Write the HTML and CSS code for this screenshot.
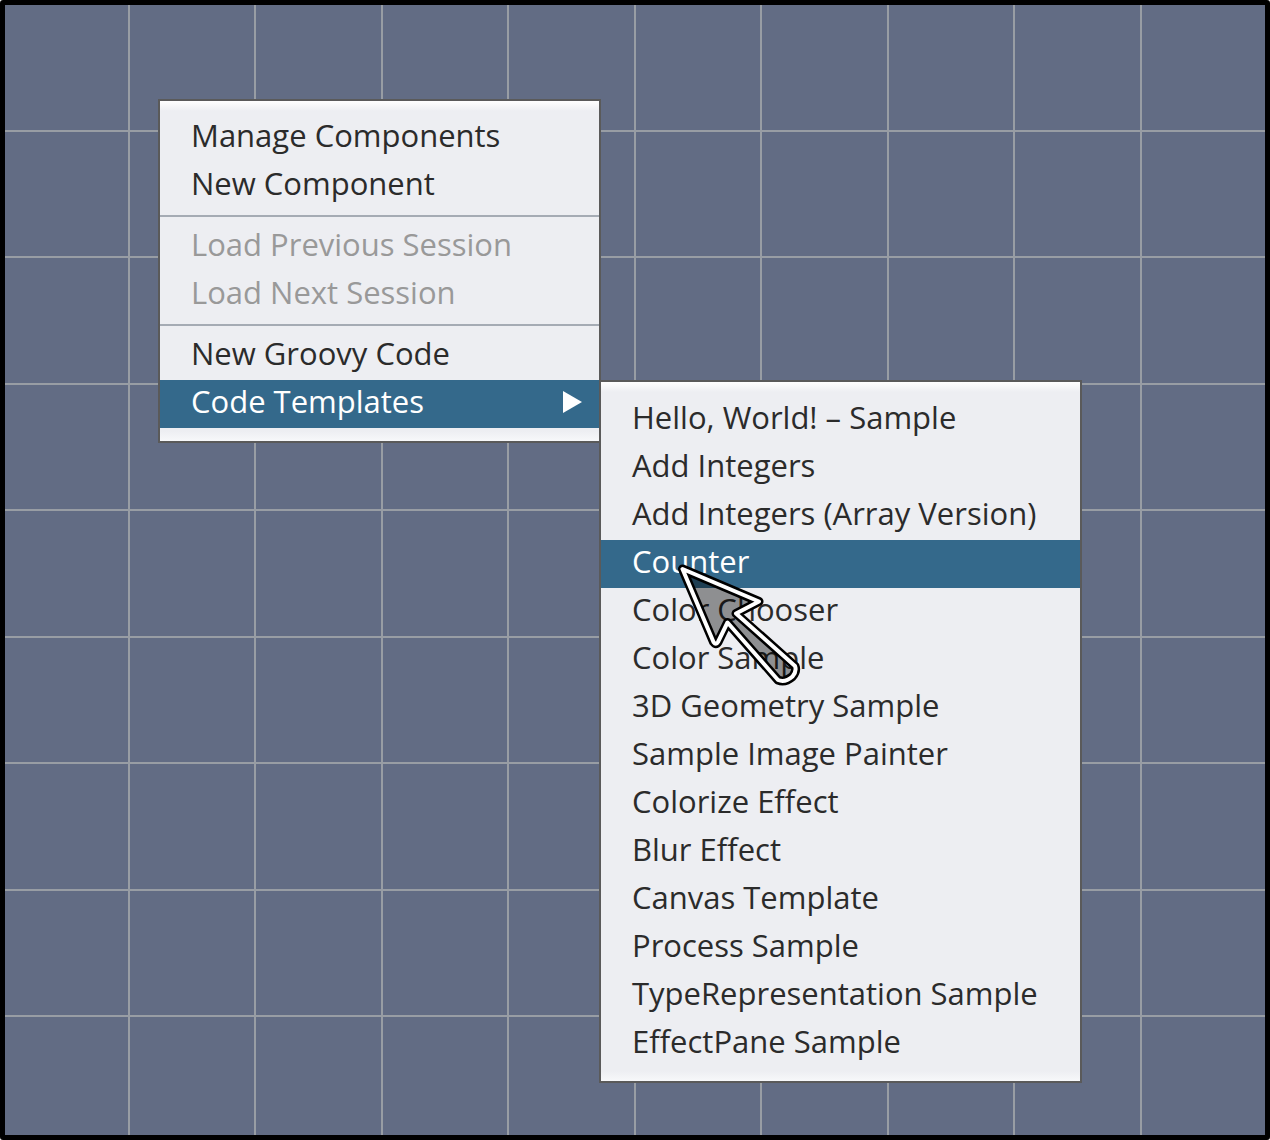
FILE: index.html
```html
<!DOCTYPE html>
<html lang="en">
<head>
<meta charset="utf-8">
<title>Code Templates</title>
<link rel="stylesheet" href="styles.css">
</head>
<body>
<main class="desktop">
  <ul class="menu menu-main">
    <li><button class="item">Manage Components</button></li>
    <li><button class="item">New Component</button></li>
    <li class="separator"></li>
    <li><button class="item" disabled>Load Previous Session</button></li>
    <li><button class="item" disabled>Load Next Session</button></li>
    <li class="separator"></li>
    <li><button class="item">New Groovy Code</button></li>
    <li>
      <button class="item selected" aria-haspopup="true" aria-expanded="true">Code Templates
        <svg class="arrow" width="20" height="24" viewBox="0 0 20 24" aria-hidden="true"><path d="M0 2L19 13L0 24Z" fill="currentColor"/></svg>
      </button>
    </li>
  </ul>
  <ul class="menu menu-templates">
    <li><button class="item">Hello, World! – Sample</button></li>
    <li><button class="item">Add Integers</button></li>
    <li><button class="item">Add Integers (Array Version)</button></li>
    <li><button class="item selected">Counter</button></li>
    <li><button class="item">Color Chooser</button></li>
    <li><button class="item">Color Sample</button></li>
    <li><button class="item">3D Geometry Sample</button></li>
    <li><button class="item">Sample Image Painter</button></li>
    <li><button class="item">Colorize Effect</button></li>
    <li><button class="item">Blur Effect</button></li>
    <li><button class="item">Canvas Template</button></li>
    <li><button class="item">Process Sample</button></li>
    <li><button class="item">TypeRepresentation Sample</button></li>
    <li><button class="item">EffectPane Sample</button></li>
  </ul>
  <svg class="pointer" width="130" height="130" viewBox="0 0 130 130" aria-hidden="true">
    <g stroke-linejoin="round">
      <path class="pointer-edge" d="M12.500 18L89 50.500L66 62.500L125 115Q127 120 122.500 125.500Q115 132 108 129L57.500 71.500L48 91Q46 94.500 43.500 91Z"/>
      <path class="pointer-line" d="M12.500 18L89 50.500L66 62.500L125 115Q127 120 122.500 125.500Q115 132 108 129L57.500 71.500L48 91Q46 94.500 43.500 91Z"/>
    </g>
  </svg>
</main>
</body>
</html>
```
FILE: styles.css
```css
* {
  box-sizing: border-box;
}

html {
  background: #fff;
}

body {
  margin: 0;
  font-family: "Lucida Grande", "Open Sans", "Noto Sans", sans-serif;
}

.desktop {
  --line: #989da4;
  position: relative;
  min-height: 100vh;
  overflow: hidden;
  border: 5px solid #000;
  border-radius: 3px;
  background-color: #626c84;
  background-image:
    linear-gradient(90deg, var(--line) 2px, transparent 2px),
    linear-gradient(90deg, var(--line) 2px, transparent 2px),
    linear-gradient(var(--line) 2px, transparent 2px),
    linear-gradient(var(--line) 2px, transparent 2px);
  background-size: 253px 253px;
  background-position: 123px 0, 249px 0, 0 125px, 0 251px;
}

.menu {
  position: absolute;
  margin: 0;
  padding: 13px 0;
  list-style: none;
  border: 2px solid #5a5a5a;
  background: linear-gradient(#fff, #edeef2 10px, #edeef2 calc(100% - 10px), #f7f8fa);
}

.menu-main {
  left: 153px;
  top: 94px;
  width: 443px;
}

.menu-templates {
  left: 594px;
  top: 375px;
  width: 483px;
  padding-top: 14px;
}

.item {
  display: flex;
  align-items: center;
  justify-content: space-between;
  width: 100%;
  height: 48px;
  margin: 0;
  padding: 0 16px 6px 31px;
  border: 0;
  background: none;
  color: #2b2b2b;
  font: inherit;
  font-size: 31px;
  line-height: 42px;
  text-align: left;
  white-space: nowrap;
}

.item:disabled {
  color: #999;
}

.selected {
  background: #34698b;
  color: #fff;
}

.separator {
  height: 13px;
  padding-top: 5px;
}

.separator::before {
  content: "";
  display: block;
  height: 2px;
  background: #a5abb4;
}

.pointer {
  position: absolute;
  left: 665px;
  top: 546px;
  overflow: visible;
}

.pointer-edge {
  fill: rgba(0, 0, 0, 0.4);
  stroke: #000;
  stroke-width: 9px;
}

.pointer-line {
  fill: none;
  stroke: #fff;
  stroke-width: 4px;
}
```
